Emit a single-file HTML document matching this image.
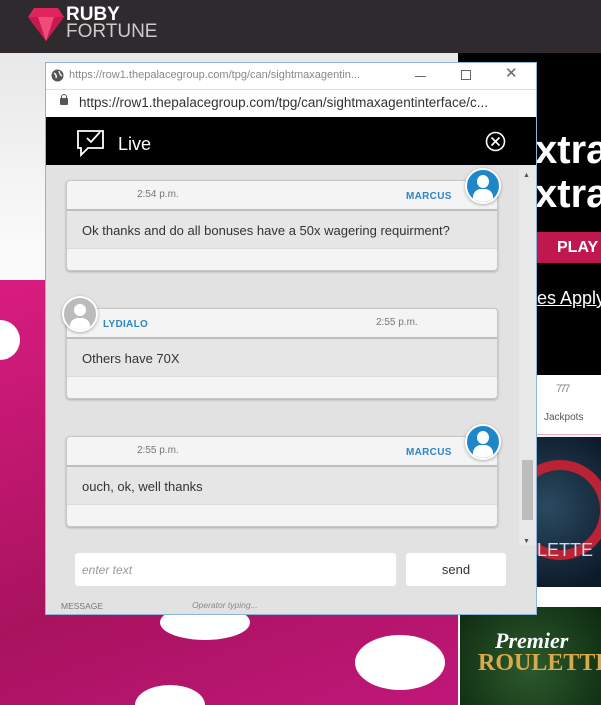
<!DOCTYPE html>
<html><head><meta charset="utf-8"><style>
*{margin:0;padding:0;box-sizing:border-box}
html,body{width:601px;height:705px;overflow:hidden}
body{position:relative;font-family:"Liberation Sans",sans-serif;background:#f3f3f3}
.a{position:absolute;white-space:nowrap}
.msg{position:absolute;left:66px;width:432px;height:91px;background:#f4f4f4;border:1px solid #c8c8c8;border-radius:4px;box-shadow:0 1px 2px rgba(0,0,0,.25)}
.msg .hd{height:30px;border-bottom:2px solid #bdbdbd;position:relative}
.msg .bd{height:38px;background:#e6e6e6;border-bottom:1px solid #ddd;font-size:13px;color:#333;padding:12px 0 0 15px}
.t{position:absolute;top:8px;font-size:10px;color:#777}
.n{position:absolute;top:10px;font-size:10px;color:#2e86c1;font-weight:bold;letter-spacing:.3px}
.av{position:absolute;width:36px;height:36px;border-radius:50%;border:2px solid #fff;box-shadow:0 1px 3px rgba(0,0,0,.3);overflow:hidden}
</style></head><body>
<div class="a" style="left:0;top:0;width:601px;height:53px;background:#2e2a2e"></div>
<svg class="a" style="left:28px;top:8px" width="36" height="34" viewBox="0 0 36 34"><polygon points="6,0 30,0 36,9 18,33 0,9" fill="#e0245e"/><polygon points="0,9 36,9 18,33" fill="#c81a50"/><polygon points="10,9 26,9 18,33" fill="#ee4d7c"/></svg>
<div class="a" style="left:66px;top:6px;color:#fff;font-weight:bold;font-size:19px;line-height:18px">RUBY</div>
<div class="a" style="left:66px;top:23px;color:#ccc;font-size:19px;line-height:18px">FORTUNE</div>
<div class="a" style="left:0;top:53px;width:458px;height:652px;background:linear-gradient(#e8e8e8,#fafafa 30%,#f5f5f5)"></div>
<div class="a" style="left:0;top:280px;width:458px;height:425px;background:linear-gradient(160deg,#d81c80,#a8135e 60%,#c0177a)"></div>
<div class="a" style="left:-20px;top:320px;width:40px;height:40px;border-radius:50%;background:#fff"></div>
<div class="a" style="left:160px;top:605px;width:90px;height:35px;border-radius:50%;background:#fff"></div>
<div class="a" style="left:355px;top:635px;width:90px;height:55px;border-radius:50%;background:#fff"></div>
<div class="a" style="left:135px;top:685px;width:70px;height:40px;border-radius:50%;background:#fff"></div>
<div class="a" style="left:458px;top:53px;width:143px;height:322px;background:#000"></div>
<div class="a" style="left:535px;top:128px;color:#fff;font-weight:bold;font-size:40px;line-height:44px">xtra<br>xtra</div>
<div class="a" style="left:537px;top:232px;width:64px;height:31px;background:#c0174f;color:#fff;font-weight:bold;font-size:16px;padding:7px 0 0 20px">PLAY</div>
<div class="a" style="left:537px;top:288px;color:#fff;font-size:18px;text-decoration:underline">es Apply</div>
<div class="a" style="left:458px;top:375px;width:143px;height:60px;background:#fff;border-bottom:1px solid #e6b0c4"></div>
<div class="a" style="left:544px;top:412px;font-size:10px;color:#555">Jackpots</div>
<div class="a" style="left:556px;top:383px;font-size:11px;color:#888;letter-spacing:-2px">777</div>
<div class="a" style="left:458px;top:437px;width:143px;height:150px;background:radial-gradient(circle at 90px 70px,#2a4a60,#0c1a2a 70%)"></div>
<div class="a" style="left:510px;top:460px;width:100px;height:100px;border-radius:50%;border:10px solid #b23;"></div>
<div class="a" style="left:537px;top:540px;color:#cde;font-size:18px">LETTE</div>
<div class="a" style="left:458px;top:587px;width:143px;height:20px;background:#fff"></div>
<div class="a" style="left:460px;top:607px;width:141px;height:98px;background:radial-gradient(circle at 70px 60px,#2c5a2c,#0d2a10)"></div>
<div class="a" style="left:495px;top:628px;color:#fff;font-style:italic;font-weight:bold;font-size:22px;font-family:'Liberation Serif',serif">Premier</div>
<div class="a" style="left:478px;top:650px;color:#d9a94a;font-weight:bold;font-size:24px;font-family:'Liberation Serif',serif">ROULETTE</div>
<div class="a" style="left:45px;top:62px;width:492px;height:553px;background:#e2e2e2;border:1px solid #8fb4d8"></div>
<div class="a" style="left:46px;top:63px;width:490px;height:26px;background:#fff"></div>
<svg class="a" style="left:51px;top:69px" width="13" height="13"><circle cx="6.5" cy="6.5" r="6" fill="#555"/><path d="M3 4 Q6 6 5 9 M8 2 Q9 6 11 7" stroke="#fff" stroke-width="1.4" fill="none"/></svg>
<div class="a" style="left:69px;top:69px;font-size:11px;color:#888">https://row1.thepalacegroup.com/tpg/can/sightmaxagentin...</div>
<div class="a" style="left:415px;top:76px;width:11px;height:1px;background:#666"></div>
<div class="a" style="left:461px;top:70px;width:10px;height:10px;border:1px solid #666"></div>
<div class="a" style="left:505px;top:64px;font-size:15px;color:#666">✕</div>
<div class="a" style="left:46px;top:89px;width:490px;height:28px;background:#fff;border-top:1px solid #ddd"></div>
<div class="a" style="left:60px;top:98px;width:8px;height:7px;background:#555;border-radius:1px"></div>
<div class="a" style="left:61px;top:94px;width:6px;height:6px;border:1.5px solid #555;border-bottom:none;border-radius:3px 3px 0 0"></div>
<div class="a" style="left:79px;top:95px;font-size:13.5px;color:#333">https://row1.thepalacegroup.com/tpg/can/sightmaxagentinterface/c...</div>
<div class="a" style="left:46px;top:117px;width:490px;height:48px;background:#000"></div>
<svg class="a" style="left:76px;top:129px" width="30" height="28" viewBox="0 0 30 28"><path d="M2 2 H27 V19 H12 L5 26 V19 H2 Z" stroke="#fff" stroke-width="1.8" fill="none"/><path d="M11 9 L15 13 L24 3" stroke="#fff" stroke-width="1.8" fill="none"/></svg>
<div class="a" style="left:118px;top:134px;color:#fff;font-size:18px">Live</div>
<svg class="a" style="left:485px;top:131px" width="21" height="21"><circle cx="10.5" cy="10.5" r="9" stroke="#fff" stroke-width="1.6" fill="none"/><path d="M6.5 6.5 L14.5 14.5 M14.5 6.5 L6.5 14.5" stroke="#fff" stroke-width="1.6"/></svg>
<div class="a" style="left:519px;top:165px;width:17px;height:380px;background:#e8e8e8"></div>
<div class="a" style="left:522px;top:460px;width:11px;height:60px;background:#bdbdbd"></div>
<div class="a" style="left:523px;top:172px;font-size:7px;color:#555">▲</div>
<div class="a" style="left:523px;top:538px;font-size:7px;color:#555">▼</div>
<div class="msg" style="top:180px"><div class="hd"><span class="t" style="left:70px">2:54 p.m.</span><span class="n" style="left:339px">MARCUS</span></div><div class="bd">Ok thanks and do all bonuses have a 50x wagering requirment?</div></div>
<div class="msg" style="top:308px"><div class="hd"><span class="n" style="left:36px">LYDIALO</span><span class="t" style="left:309px">2:55 p.m.</span></div><div class="bd">Others have 70X</div></div>
<div class="msg" style="top:436px"><div class="hd"><span class="t" style="left:70px">2:55 p.m.</span><span class="n" style="left:339px">MARCUS</span></div><div class="bd">ouch, ok, well thanks</div></div>
<div class="av" style="left:465px;top:168px;background:#1f86c8"><div class="a" style="left:10px;top:5px;width:12px;height:13px;border-radius:50%;background:#fff"></div><div class="a" style="left:6px;top:19px;width:20px;height:16px;border-radius:8px 8px 0 0;background:#fff"></div></div>
<div class="av" style="left:465px;top:424px;background:#1f86c8"><div class="a" style="left:10px;top:5px;width:12px;height:13px;border-radius:50%;background:#fff"></div><div class="a" style="left:6px;top:19px;width:20px;height:16px;border-radius:8px 8px 0 0;background:#fff"></div></div>
<div class="av" style="left:62px;top:296px;background:#bbb"><div class="a" style="left:10px;top:6px;width:12px;height:12px;border-radius:50%;background:#fff"></div><div class="a" style="left:6px;top:20px;width:20px;height:16px;border-radius:8px 8px 0 0;background:#fff"></div></div>
<div class="a" style="left:75px;top:553px;width:321px;height:33px;background:#fff;border-radius:3px;font-size:12px;color:#999;font-style:italic;padding:10px 0 0 7px">enter text</div>
<div class="a" style="left:406px;top:553px;width:100px;height:33px;background:#fff;border-radius:3px;font-size:13px;color:#333;text-align:center;padding-top:9px">send</div>
<div class="a" style="left:61px;top:601px;font-size:8.5px;color:#777">MESSAGE</div>
<div class="a" style="left:192px;top:600px;font-size:8.5px;color:#888;font-style:italic">Operator typing...</div>
</body></html>
